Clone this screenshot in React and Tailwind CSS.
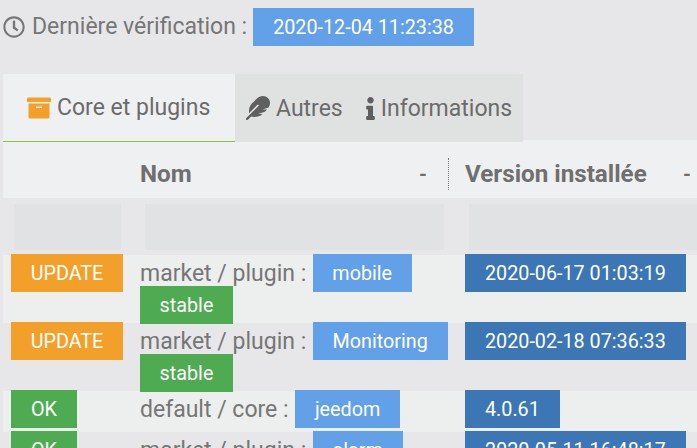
import React from 'react';
import { FaRegClock, FaArchive, FaFeather, FaInfo } from 'react-icons/fa';

function Badge({ color, className = '', children }) {
  return (
    <span className={`relative inline-block h-[38px] text-[19.75px] leading-[40px] text-white whitespace-nowrap ${color} ${className}`}>
      {children}
    </span>
  );
}

const blue = 'bg-[#62a0e8]';
const darkBlue = 'bg-[#3c76b4]';
const orange = 'bg-[#f2a029]';
const green = 'bg-[#4fab52]';

const rows = [
  { state: 'UPDATE', stateWidth: 'w-[112px]', color: orange, source: 'market / plugin :', name: 'mobile', nameWidth: 'w-[99px]', version: '2020-06-17 01:03:19', branch: 'stable', bg: 'bg-[#edeeee]' },
  { state: 'UPDATE', stateWidth: 'w-[112px]', color: orange, source: 'market / plugin :', name: 'Monitoring', nameWidth: 'w-[135px]', version: '2020-02-18 07:36:33', branch: 'stable', bg: 'bg-[#e7e7e9]' },
  { state: 'OK', stateWidth: 'w-[66px]', color: green, source: 'default / core :', name: 'jeedom', nameWidth: 'w-[105px]', version: '4.0.61', bg: 'bg-[#edeeee]' },
  { state: 'OK', stateWidth: 'w-[66px]', color: green, source: 'market / plugin :', name: 'alarm', nameWidth: 'w-[90px]', version: '2020-05-11 16:48:17', bg: 'bg-[#e7e7e9]' },
];

function Row({ row }) {
  return (
    <div className={`grid grid-cols-[137px_325px_1fr] ${row.bg} ${row.branch ? 'h-[68px]' : 'h-[41px]'}`}>
      <div className="pl-2 -mt-px">
        <Badge color={row.color} className={`text-center ${row.stateWidth}`}>{row.state}</Badge>
      </div>
      <div className="-mt-px">
        <div className="flex items-center gap-[6.5px] h-[38px]">
          <span className="pt-[2px] text-[#767676]">{row.source}</span>
          <Badge color={blue} className={`text-center ${row.nameWidth}`}>{row.name}</Badge>
        </div>
        {row.branch && <Badge color={green} className="w-[93px] text-center -mt-[6px] align-top">{row.branch}</Badge>}
      </div>
      <div className="-mt-px">
        <Badge color={darkBlue} className="px-5">{row.version}</Badge>
      </div>
    </div>
  );
}

export default function App() {
  return (
    <div className="h-screen overflow-hidden bg-[#e7e7e9] pl-[3px] text-[23px] font-['Roboto',sans-serif]">
      <div className="flex items-center h-[37px] mt-2 text-[#767676]">
        <FaRegClock className="w-[22px] h-[22px] mr-[7px]" />
        <span className="pt-[2px]">Dernière vérification :</span>
        <Badge color={blue} className="px-5 ml-[6px]">2020-12-04 11:23:38</Badge>
      </div>

      <div className="relative flex h-[68px] mt-[29px] w-fit text-[#6b6b6b]">
        <div className="flex items-center w-[232px] pl-6 bg-[#eff0f2] border-b border-[#94c13d]">
          <FaArchive className="w-[24px] h-[24px] mr-[6px] text-[#f2a029]" />
          <span className="pt-[2px]">Core et plugins</span>
        </div>
        <div className="flex items-center w-[288px] pl-[11px] bg-[#e0e2e1]">
          <FaFeather className="w-[24px] h-[24px] mr-[6px] text-[#5f5f5f]" />
          <span className="pt-[2px]">Autres</span>
          <FaInfo className="w-[9px] h-[23px] ml-[23px] mr-[6px] text-[#5f5f5f]" />
          <span className="pt-[2px]">Informations</span>
        </div>
      </div>

      <div className="-mt-[2px] grid grid-cols-[137px_325px_1fr] items-center h-[58px] pt-[10px] bg-[#eff0f2] font-bold text-[24.2px] text-[#6f6f6f]">
        <div />
        <div className="flex justify-between items-center h-[32px] border-r border-dotted border-[#777] mr-[16px]">
          <span>Nom</span>
          <span className="mr-[21px] text-[20px]">-</span>
        </div>
        <div className="flex justify-between items-center">
          <span>Version installée</span>
          <span className="mr-[6px] text-[20px]">-</span>
        </div>
      </div>

      <div className="grid grid-cols-[137px_325px_1fr] h-[57px] pt-[6px]">
        <div className="ml-[11px] w-[107px] h-[46px] bg-[#e1e2e4]" />
        <div className="ml-[5px] w-[299px] h-[46px] bg-[#e1e2e4]" />
        <div className="ml-[4px] h-[46px] bg-[#e1e2e4]" />
      </div>

      {rows.map((row) => (
        <Row key={row.name} row={row} />
      ))}
    </div>
  );
}
